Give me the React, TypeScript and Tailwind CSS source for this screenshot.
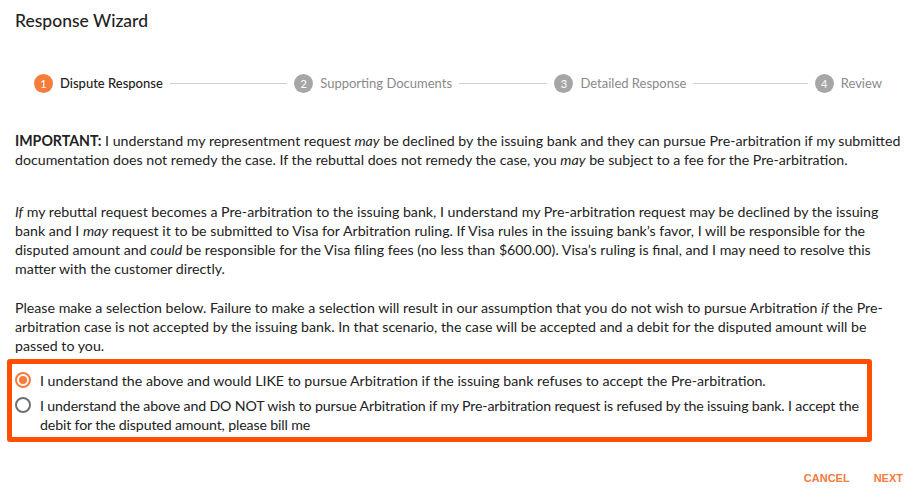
import { useState } from 'react';

const steps = ['Dispute Response', 'Supporting Documents', 'Detailed Response', 'Review'];

function Radio({ checked, onClick }: { checked: boolean; onClick: () => void }) {
  return (
    <button
      type="button"
      onClick={onClick}
      className={`mt-[1px] flex h-[16px] w-[16px] shrink-0 items-center justify-center rounded-full border-2 ${
        checked ? 'border-[#f47b3b]' : 'border-[#707070]'
      }`}
    >
      {checked && <span className="h-[8px] w-[8px] rounded-full bg-[#f47b3b]" />}
    </button>
  );
}

export default function App() {
  const [choice, setChoice] = useState<'yes' | 'no'>('yes');

  return (
    <div className="h-[498px] w-[920px] bg-white font-['Lato',sans-serif] text-[#222]">
      <h1 className="px-[15px] pt-[10px] text-[17.5px] leading-[22px] font-medium">Response Wizard</h1>

      <div className="mt-[42px] flex items-center pl-[34px] pr-[38px]">
        {steps.map((s, i) => (
          <div key={s} className={`flex items-center ${i < steps.length - 1 ? 'flex-1' : ''}`}>
            <span
              className={`flex h-[19px] w-[19px] items-center justify-center rounded-full text-[11px] text-white ${
                i === 0 ? 'bg-[#f57c3a]' : 'bg-[#a6a6a6]'
              }`}
            >
              {i + 1}
            </span>
            <span
              className={`ml-[7px] whitespace-nowrap text-[13px] ${
                i === 0 ? 'font-medium text-[#222]' : 'text-[#8a8a8a]'
              }`}
            >
              {s}
            </span>
            {i < steps.length - 1 && <span className="mx-[7px] h-px flex-1 bg-[#cfcfcf]" />}
          </div>
        ))}
      </div>

      <div className="mt-[37px] pl-[15px] pr-[12px] text-[14.2px] leading-[19px]">
        <p>
          <b className="font-bold">IMPORTANT:</b> I understand my representment request <i>may</i> be declined by the
          issuing bank and they can pursue Pre-arbitration if my submitted documentation does not remedy the case. If the
          rebuttal does not remedy the case, you <i>may</i> be subject to a fee for the Pre-arbitration.
        </p>
        <p className="mt-[33px]">
          <i>If</i> my rebuttal request becomes a Pre-arbitration to the issuing bank, I understand my Pre-arbitration
          request may be declined by the issuing bank and I <i>may</i> request it to be submitted to Visa for Arbitration
          ruling. If Visa rules in the issuing bank’s favor, I will be responsible for the disputed amount and{' '}
          <i>could</i> be responsible for the Visa filing fees (no less than $600.00). Visa’s ruling is final, and I may
          need to resolve this matter with the customer directly.
        </p>
        <p className="mt-[20px]">
          Please make a selection below. Failure to make a selection will result in our assumption that you do not wish
          to pursue Arbitration <i>if</i> the Pre-arbitration case is not accepted by the issuing bank. In that scenario,
          the case will be accepted and a debit for the disputed amount will be passed to you.
        </p>
      </div>

      <div className="ml-[7px] mt-[4px] w-[865px] rounded-[3px] border-[5px] border-[#ff5000] pb-[3px] pl-[3px] pt-[7px] text-[14.2px] leading-[19px]">
        <label className="flex items-start gap-[9px]">
          <Radio checked={choice === 'yes'} onClick={() => setChoice('yes')} />
          <span>I understand the above and would LIKE to pursue Arbitration if the issuing bank refuses to accept the Pre-arbitration.</span>
        </label>
        <label className="mt-[6px] flex items-start gap-[9px]">
          <Radio checked={choice === 'no'} onClick={() => setChoice('no')} />
          <span className="-mr-[4px] tracking-[-0.15px]">
            I understand the above and DO NOT wish to pursue Arbitration if my Pre-arbitration request is refused by the
            issuing bank. I accept the debit for the disputed amount, please bill me
          </span>
        </label>
      </div>

      <div className="mt-[28px] flex justify-end gap-[24px] pr-[17px] font-['Liberation_Sans',sans-serif] text-[11px] font-bold text-[#f57c3a]">
        <button type="button">CANCEL</button>
        <button type="button">NEXT</button>
      </div>
    </div>
  );
}
